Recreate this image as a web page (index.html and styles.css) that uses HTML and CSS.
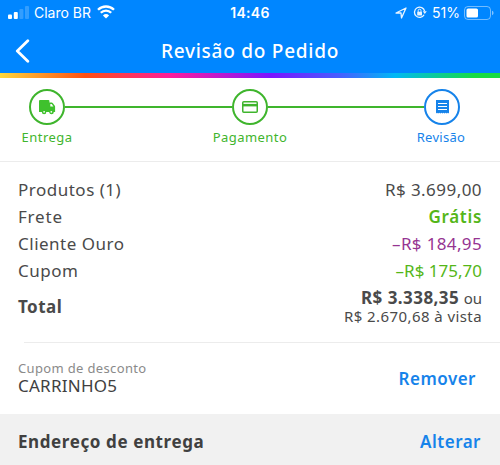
FILE: index.html
```html
<!DOCTYPE html>
<html lang="pt-BR">
<head>
<meta charset="utf-8">
<title>Revisão do Pedido</title>
<link rel="stylesheet" href="styles.css">
</head>
<body>
<header class="header">
  <div class="status">
    <div class="status-left">
      <svg class="signal" width="21" height="13" viewBox="0 0 21 13" fill="#fff"><rect x="0" y="8.5" width="4" height="4.5" rx="1"/><rect x="5.8" y="6" width="4" height="7" rx="1"/><rect x="11.4" y="3" width="4" height="10" rx="1" opacity=".2"/><rect x="17" y="0" width="4" height="13" rx="1" opacity=".2"/></svg>
      <span class="carrier">Claro BR</span>
      <svg class="wifi" width="18" height="14" viewBox="0 0 18 14"><path d="M1 4.8a11.3 11.3 0 0 1 16 0M3.8 7.8a7.3 7.3 0 0 1 10.4 0" fill="none" stroke="#fff" stroke-width="2.3"/><path d="M9 13.6 5.9 10.4a4.5 4.5 0 0 1 6.2 0z" fill="#fff"/></svg>
    </div>
    <span class="clock">14:46</span>
    <div class="status-right">
      <svg width="12" height="12" viewBox="0 0 12 12"><path d="M1 6 11 1 6.5 11 6 6z" fill="none" stroke="#e9f4ff" stroke-width="1.3" stroke-linejoin="round"/></svg>
      <svg class="lock" width="14" height="13" viewBox="0 0 14 13"><path d="M11.1 8.7A5.1 5.1 0 1 1 11.6 5.2" fill="none" stroke="#e9f4ff" stroke-width="1.3"/><path d="M9.8 5.3h4l-2 2.7z" fill="#e9f4ff"/><rect x="4.2" y="5.8" width="4.8" height="3.7" rx=".6" fill="#e9f4ff"/><path d="M5.2 6V4.6a1.4 1.4 0 0 1 2.8 0V6" fill="none" stroke="#e9f4ff"/></svg>
      <span class="percent">51%</span>
      <svg class="battery" width="30" height="14" viewBox="0 0 30 14"><rect x=".5" y=".5" width="26" height="13" rx="3.5" fill="none" stroke="#fff" opacity=".45"/><rect x="2.5" y="2.4" width="11.5" height="9.2" rx="1.6" fill="#fff"/><path d="M28 4.8c2 .6 2 3.8 0 4.4z" fill="#fff" opacity=".5"/></svg>
    </div>
  </div>
  <div class="titlebar">
    <svg class="back" width="15" height="24" viewBox="0 0 15 24"><path d="M12.8 1.8 2.3 12l10.5 10.2" fill="none" stroke="#fff" stroke-width="2.8" stroke-linecap="round" stroke-linejoin="round"/></svg>
    <h1 class="title">Revisão do Pedido</h1>
  </div>
</header>
<div class="rainbow"></div>
<nav class="stepper">
  <div class="track">
    <span class="node"><svg width="18" height="16" viewBox="0 0 18 16"><path fill="#3fc12d" d="M2 1h8.500q.9 0 .9.9V3.500h2.300q.7 0 1.200.7l1.900 2.600q.3.5.3 1V13h-1.300a2.200 2.200 0 0 1-4.400 0H8.300a2.200 2.200 0 0 1-4.400 0H1V1.900q0-.9 1-.9z"/><path fill="#fff" d="M12.300 5h1.400l1.700 2.600h-3.100z"/><circle cx="6.100" cy="12.800" r="2" fill="#3fc12d"/><circle cx="13.300" cy="12.800" r="2" fill="#3fc12d"/><circle cx="6.100" cy="12.800" r=".9" fill="#fff"/><circle cx="13.300" cy="12.800" r=".9" fill="#fff"/></svg></span>
    <span class="line line-one"></span>
    <span class="node"><svg width="16" height="12" viewBox="0 0 16 12"><rect x=".75" y=".75" width="14.500" height="10.500" rx="1" fill="none" stroke="#3fb52d" stroke-width="1.500"/><path d="M1 2.900h14v2.500H1z" fill="#3fb52d"/></svg></span>
    <span class="line line-two"></span>
    <span class="node node-current"><svg width="13" height="14" viewBox="0 0 13 14"><path fill="#1683ea" d="M0 0h13v13.500l-1.100-.8-1.100.8-1.100-.8-1.100.8-1.100-.8-1 .8-1.100-.8-1.100.8-1.100-.8-1.100.8-1.100-.8-1 .8z"/><path d="M2 3.500h9M2 6.500h9M2 9.500h9" stroke="#fff" stroke-width="1.100"/></svg></span>
  </div>
  <div class="labels">
    <span class="label label-first">Entrega</span>
    <span class="label label-middle">Pagamento</span>
    <span class="label label-current">Revisão</span>
  </div>
</nav>
<section class="summary">
  <div class="row"><span>Produtos (1)</span><span class="price">R$ 3.699,00</span></div>
  <div class="row"><span class="shipping">Frete</span><span class="free">Grátis</span></div>
  <div class="row"><span>Cliente Ouro</span><span class="gold">–R$ 184,95</span></div>
  <div class="row"><span>Cupom</span><span class="coupon-value">–R$ 175,70</span></div>
  <div class="row total"><strong>Total</strong><div class="amounts"><div class="amount"><strong class="price">R$ 3.338,35</strong> <span class="or">ou</span></div><div class="cash">R$ 2.670,68 à vista</div></div></div>
</section>
<section class="coupon">
  <div><div class="coupon-label">Cupom de desconto</div><div class="coupon-code">CARRINHO5</div></div>
  <a class="action remove">Remover</a>
</section>
<section class="address"><h2 class="address-title">Endereço de entrega</h2><a class="action change">Alterar</a></section>
</body>
</html>
```
FILE: styles.css
```css
* { box-sizing: border-box; }
body { margin: 0; width: 500px; height: 465px; overflow: hidden; background: #fff; color: #4a4a4a; font: 17px/27px "Noto Sans", sans-serif; }
svg { display: block; flex: none; }
h1, h2 { margin: 0; }
span, a, strong, .cash, .coupon-label, .coupon-code { white-space: nowrap; }
.header { height: 73px; background: #0086ff; color: #fff; }
.status { height: 25px; display: grid; grid-template-columns: 1fr auto 1fr; align-items: center; font: 14px/25px Inter, sans-serif; }
.status-left, .status-right { display: flex; align-items: center; }
.status-left { padding-left: 8px; }
.carrier { margin-left: 5px; }
.wifi { margin-left: 6px; margin-top: -2px; }
.clock { font-weight: 600; letter-spacing: .3px; }
.status-right { justify-content: flex-end; padding-right: 6px; }
.lock { margin-left: 6px; }
.percent { margin: 0 4px 0 5px; }
.titlebar { height: 48px; display: grid; grid-template-columns: 80px 1fr 80px; align-items: center; }
.back { margin: 3px 0 0 15px; }
.title { text-align: center; font-size: 19px; font-weight: 500; letter-spacing: .75px; line-height: 48px; padding-top: 2px; height: 48px; }
.rainbow { height: 5px; background: linear-gradient(90deg, #ffd83b 0%, #ff5012 17%, #ff1e9b 34%, #7c13ff 54%, #465fff 68%, #00b8f5 79%, #17dc42 95%); }
.stepper { height: 84px; padding-top: 11px; border-bottom: 1px solid #ececec; }
.track { display: flex; align-items: center; padding: 0 40px 0 29px; }
.node { flex: none; width: 36px; height: 36px; border: 2px solid #3fb52d; border-radius: 50%; display: grid; place-items: center; }
.node-current { border-color: #1683ea; }
.line { height: 2px; background: #3fb52d; }
.line-one { flex: 167 1 0; }
.line-two { flex: 156 1 0; }
.labels { display: grid; grid-template-columns: 94px 1fr 118px; font-size: 13px; letter-spacing: .45px; line-height: 25px; color: #3fb52d; text-align: center; }
.label-current { color: #1683ea; letter-spacing: .3px; }
.label-middle { padding-left: 24px; }
.summary { height: 181px; margin-left: 24px; padding: 14px 18px 0 0; border-bottom: 1px solid #ececec; letter-spacing: .5px; }
.row { display: flex; justify-content: space-between; margin-left: -6px; }
.shipping { letter-spacing: .8px; }
.price { letter-spacing: .45px; }
.free { color: #54b618; font-weight: 600; letter-spacing: .7px; }
.gold { color: #963492; letter-spacing: .35px; }
.coupon-value { color: #54b618; letter-spacing: 0; }
.total { align-items: center; padding-top: 4px; }
.amounts { text-align: right; letter-spacing: 0; }
.amount { line-height: 19px; }
.or { font-size: 15px; }
.cash { font-size: 15px; line-height: 17px; letter-spacing: .42px; }
.coupon { height: 71px; padding: 15px 24px 0 18px; display: flex; justify-content: space-between; }
.coupon-label { font-size: 13px; line-height: 20px; letter-spacing: .35px; color: #8a8a8a; }
.coupon-code { font-size: 17px; line-height: 16px; letter-spacing: .25px; color: #404040; }
.action { color: #1683ea; font-weight: 600; letter-spacing: .5px; }
.remove { line-height: 42px; }
.address { height: 51px; padding: 3px 19px 0 18px; background: #f1f1f1; display: flex; justify-content: space-between; align-items: center; }
.address-title { font-size: 17px; letter-spacing: .6px; color: #404040; }
```
